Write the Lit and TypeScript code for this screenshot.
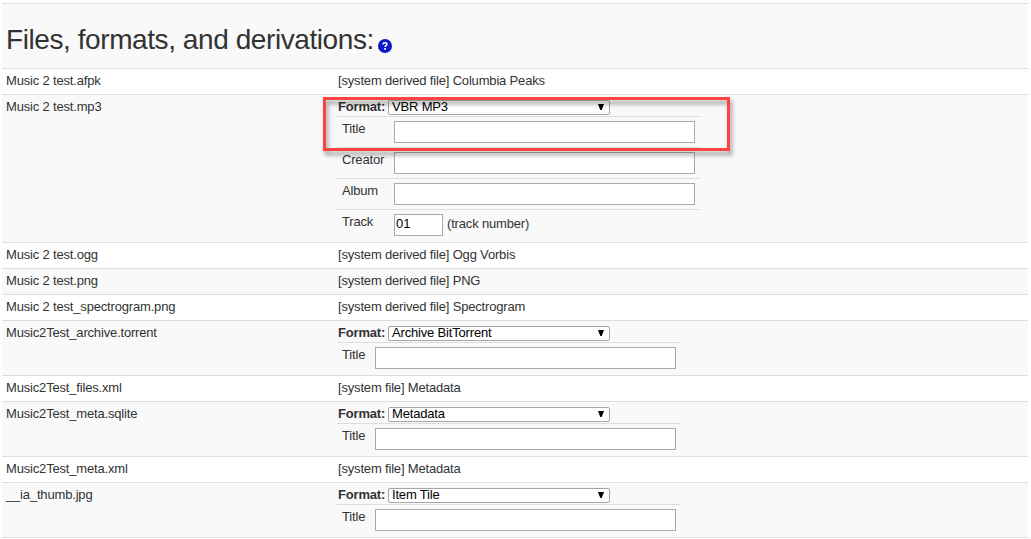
import { LitElement, html, css, nothing } from "lit";
import { customElement, property } from "lit/decorators.js";
import { classMap } from "lit/directives/class-map.js";

interface Field {
  label: string;
  value?: string;
  hint?: string;
}

interface FileRow {
  name: string;
  note?: string;
  format?: string;
  fields?: Field[];
  marked?: boolean;
}

const FILES: FileRow[] = [
  { name: "Music 2 test.afpk", note: "[system derived file] Columbia Peaks" },
  {
    name: "Music 2 test.mp3",
    format: "VBR MP3",
    marked: true,
    fields: [
      { label: "Title" },
      { label: "Creator" },
      { label: "Album" },
      { label: "Track", value: "01", hint: "(track number)" },
    ],
  },
  { name: "Music 2 test.ogg", note: "[system derived file] Ogg Vorbis" },
  { name: "Music 2 test.png", note: "[system derived file] PNG" },
  { name: "Music 2 test_spectrogram.png", note: "[system derived file] Spectrogram" },
  { name: "Music2Test_archive.torrent", format: "Archive BitTorrent", fields: [{ label: "Title" }] },
  { name: "Music2Test_files.xml", note: "[system file] Metadata" },
  { name: "Music2Test_meta.sqlite", format: "Metadata", fields: [{ label: "Title" }] },
  { name: "Music2Test_meta.xml", note: "[system file] Metadata" },
  { name: "__ia_thumb.jpg", format: "Item Tile", fields: [{ label: "Title" }] },
];

@customElement("format-editor")
export class FormatEditor extends LitElement {
  @property() format = "";
  @property({ attribute: false }) fields: Field[] = [];

  static styles = css`
    :host {
      display: block;
      padding-top: 5px;
    }
    .format {
      display: flex;
      height: 16px;
    }
    .caption {
      width: 50px;
      font-weight: bold;
      line-height: 14px;
    }
    .select {
      box-sizing: border-box;
      display: flex;
      justify-content: space-between;
      width: 222px;
      height: 15px;
      padding: 0 5px 0 3px;
      border: 1px solid #a6a6a6;
      border-radius: 2px;
      background: #fff;
      color: #000;
      line-height: 12px;
    }
    .arrow {
      width: 6px;
      height: 6px;
      margin-top: 3px;
    }
    .fields {
      width: max-content;
      margin-left: -1px;
    }
    .field {
      box-sizing: border-box;
      display: flex;
      height: 31px;
      padding: 4px 5px 0;
      border-top: 1px solid #ddd;
    }
    .label {
      width: 33px;
      line-height: 15px;
    }
    .wide .label {
      width: 52px;
    }
    .input {
      box-sizing: border-box;
      width: 301px;
      height: 22px;
      margin: 0;
      padding: 0 1px 3px;
      border: 1px solid #a9a9a9;
      border-radius: 0;
      outline: none;
      background: #fff;
      color: #000;
      font: inherit;
    }
    .short {
      width: 49px;
    }
    .hint {
      padding-left: 4px;
      line-height: 19px;
    }
  `;

  render() {
    return html`
      <div class="format">
        <span class="caption">Format:</span>
        <div class="select">
          <span>${this.format}</span>
          <svg class="arrow" viewBox="0 0 6 6"><path d="M0 0h6L3.7 6H2.3z" /></svg>
        </div>
      </div>
      <div class=${classMap({ fields: true, wide: this.fields.length > 1 })}>
        ${this.fields.map(
          (f) => html`
            <div class="field">
              <span class="label">${f.label}</span>
              <input class=${classMap({ input: true, short: !!f.hint })} .value=${f.value ?? ""} />
              ${f.hint ? html`<span class="hint">${f.hint}</span>` : nothing}
            </div>
          `,
        )}
      </div>
    `;
  }
}

@customElement("app-root")
export class AppRoot extends LitElement {
  static styles = css`
    :host {
      display: block;
      box-sizing: border-box;
      height: 539px;
      padding: 3px 3px 0 2px;
      overflow: hidden;
      background: #fff;
      color: #333;
      font: 13px/16px "Liberation Sans", Arial, sans-serif;
      letter-spacing: -0.175px;
    }
    .files {
      border-bottom: 1px solid #ddd;
    }
    .heading,
    .row {
      box-sizing: border-box;
      border-top: 1px solid #ddd;
    }
    .heading {
      display: flex;
      height: 65px;
      padding: 20px 0 0 4px;
      background: #f9f9f9;
    }
    .title {
      width: 368px;
      margin: 0;
      font-size: 28px;
      font-weight: normal;
      line-height: 32px;
      letter-spacing: -0.42px;
      white-space: nowrap;
    }
    .help {
      width: 14px;
      height: 14px;
      margin: 15px 0 0 4px;
    }
    .row {
      position: relative;
      display: grid;
      grid-template-columns: 332px 1fr;
      height: 26px;
      padding-left: 4px;
    }
    .editable {
      height: 55px;
    }
    .marked {
      height: 148px;
    }
    .row:nth-child(odd) {
      background: #f9f9f9;
    }
    .text {
      padding-top: 4px;
    }
    .mark {
      position: absolute;
      box-sizing: border-box;
      top: 2px;
      left: 321px;
      width: 407px;
      height: 54px;
      border: 3px solid #fe4343;
      filter: drop-shadow(2px 4px 2px rgba(0, 0, 0, 0.4));
    }
  `;

  render() {
    return html`
      <div class="files">
        <div class="heading">
          <h1 class="title">Files, formats, and derivations:</h1>
          <svg class="help" viewBox="0 0 14 14">
            <circle cx="7" cy="7" r="7" fill="#0c19c8" />
            <path d="M5 5.4Q5.1 3.7 7 3.7T8.9 5.3Q8.9 6.2 7.9 6.7 7.1 7.1 7.1 8.1" fill="none" stroke="#fff" stroke-width="1.6" />
            <rect x="6.2" y="9" width="1.8" height="1.7" fill="#fff" />
          </svg>
        </div>
        ${FILES.map(
          (file) => html`
            <div class=${classMap({ row: true, editable: !!file.format, marked: !!file.marked })}>
              <div class="text">${file.name}</div>
              ${file.format
                ? html`<format-editor .format=${file.format} .fields=${file.fields ?? []}></format-editor>`
                : html`<div class="text">${file.note}</div>`}
              ${file.marked ? html`<div class="mark"></div>` : nothing}
            </div>
          `,
        )}
      </div>
    `;
  }
}
